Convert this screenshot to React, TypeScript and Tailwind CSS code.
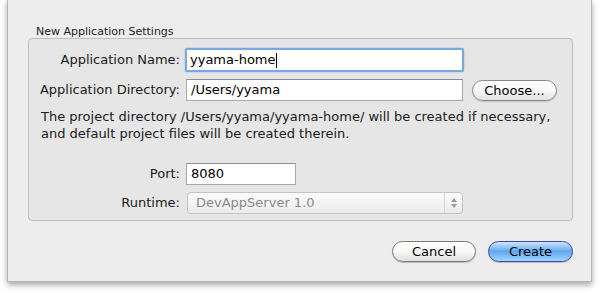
import React from 'react';

const font = { fontFamily: '"DejaVu Sans", "Noto Sans", sans-serif' };

const Label: React.FC<{ children: React.ReactNode }> = ({ children }) => (
  <div className="w-[156px] shrink-0 text-right pr-[5px] text-[13px] text-[#1a1a1a]">{children}</div>
);

const App: React.FC = () => {
  return (
    <div className="w-[600px] h-[293px] bg-white" style={font}>
      <div className="ml-[7px] w-[585px] h-[282px] bg-[#ededed] border-x border-b border-[#b5b5b5] shadow-[0_3px_6px_rgba(0,0,0,0.35)] pt-[25px] pl-[20px] pr-[18px]">
        <div className="pl-[8px] text-[11px] leading-[13px] text-[#222]">New Application Settings</div>
        <div className="h-[183px] rounded-[4px] border border-[#bdbdbd] bg-[#e6e6e6] pt-[9px] pr-[14px]">
          <div className="flex items-center h-[24px]">
            <Label>Application Name:</Label>
            <div className="w-[279px] h-[24px] rounded-[2px] border-2 border-[#7aa7e0] shadow-[0_0_2px_#8db5ea] bg-white flex items-center pl-[3px] text-[13px] text-black">
              yyama-home<span className="inline-block w-px h-[15px] bg-black" />
            </div>
          </div>
          <div className="flex items-center h-[22px] mt-[7px]">
            <Label>Application Directory:</Label>
            <div className="w-[277px] h-[22px] ml-[1px] border border-[#a9a9a9] border-t-[#8e8e8e] bg-white flex items-center pl-[4px] text-[13px] text-black">
              /Users/yyama
            </div>
            <button className="ml-[9px] w-[85px] h-[21px] rounded-full border border-[#8a8a8a] bg-gradient-to-b from-white via-[#f7f7f7] to-[#e2e2e2] text-[13px] text-black shadow-[0_1px_1px_rgba(0,0,0,0.15)]">
              Choose...
            </button>
          </div>
          <div className="mt-[7px] pl-[12px] text-[13px] leading-[17px] text-[#1a1a1a]">
            <div>The project directory /Users/yyama/yyama-home/ will be created if necessary,</div>
            <div>and default project files will be created therein.</div>
          </div>
          <div className="flex items-center h-[22px] mt-[21px]">
            <Label>Port:</Label>
            <div className="w-[110px] h-[22px] ml-[1px] border border-[#a9a9a9] border-t-[#8e8e8e] bg-white flex items-center pl-[4px] text-[13px] text-black">
              8080
            </div>
          </div>
          <div className="flex items-center h-[22px] mt-[7px]">
            <Label>Runtime:</Label>
            <div className="w-[276px] h-[22px] ml-[2px] rounded-[4px] border border-[#c4c4c4] bg-gradient-to-b from-[#fbfbfb] to-[#ececec] flex items-center text-[13px] text-[#8a8a8a]">
              <span className="flex-1 pl-[8px]">DevAppServer 1.0</span>
              <span className="w-[18px] h-full border-l border-[#d4d4d4] flex flex-col items-center justify-center gap-[2px]">
                <svg width="6" height="4" viewBox="0 0 6 4"><path d="M3 0L6 4H0z" fill="#9a9a9a" /></svg>
                <svg width="6" height="4" viewBox="0 0 6 4"><path d="M0 0H6L3 4z" fill="#9a9a9a" /></svg>
              </span>
            </div>
          </div>
        </div>
        <div className="flex justify-end gap-[12px] mt-[20px]">
          <button className="w-[84px] h-[21px] rounded-full border border-[#7a7a7a] bg-gradient-to-b from-white via-[#f7f7f7] to-[#e0e0e0] text-[13px] text-black shadow-[0_1px_1px_rgba(0,0,0,0.2)]">
            Cancel
          </button>
          <button className="w-[85px] h-[21px] rounded-full border border-[#3f46a6] bg-gradient-to-b from-[#cfe6fc] via-[#5ea8f0] to-[#a6d6fd] text-[13px] text-black shadow-[0_1px_1px_rgba(0,0,0,0.2)]">
            Create
          </button>
        </div>
      </div>
    </div>
  );
};

export default App;
